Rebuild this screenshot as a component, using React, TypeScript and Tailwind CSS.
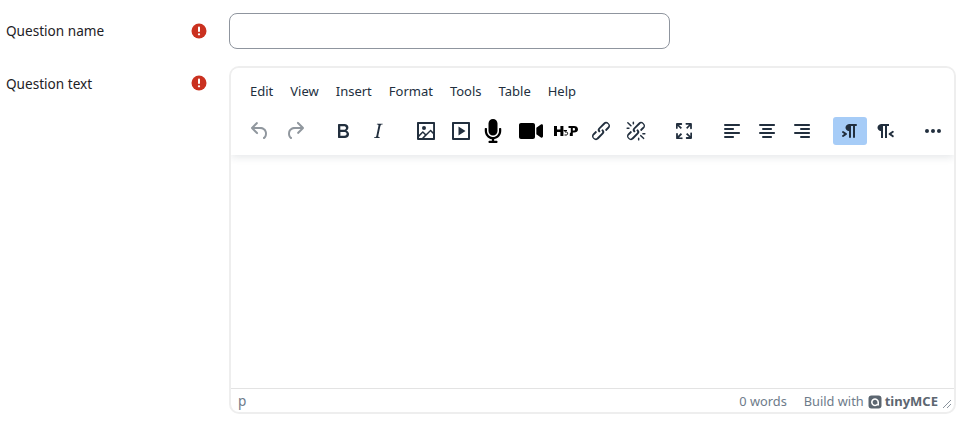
import React from "react";
import { FaMicrophone, FaVideo } from "react-icons/fa";

const P: Record<string, string> = {
  undo: "M6.4 8H12c3.7 0 6.2 2 6.8 5.1.6 2.7-.4 5.6-2.3 6.8a1 1 0 0 1-1-1.8c1.1-.6 1.8-2.7 1.4-4.6-.5-2.1-2.1-3.5-4.9-3.5H6.4l3.3 3.3a1 1 0 1 1-1.4 1.4l-5-5a1 1 0 0 1 0-1.4l5-5a1 1 0 0 1 1.4 1.4L6.4 8Z",
  redo: "M17.6 10H12c-2.8 0-4.4 1.4-4.9 3.5-.4 2 .3 4 1.4 4.6a1 1 0 1 1-1 1.8c-2-1.2-2.9-4.1-2.3-6.8.6-3 3-5.1 6.8-5.1h5.6l-3.3-3.3a1 1 0 1 1 1.4-1.4l5 5a1 1 0 0 1 0 1.4l-5 5a1 1 0 0 1-1.4-1.4l3.3-3.3Z",
  bold: "M7.8 19c-.3 0-.5 0-.6-.2l-.2-.5V5.7c0-.2 0-.4.2-.5l.6-.2h5c1.5 0 2.7.3 3.5 1 .7.6 1.1 1.4 1.1 2.5a3 3 0 0 1-.6 1.9c-.4.6-1 1-1.6 1.2.4.1.9.3 1.3.6s.8.7 1 1.2c.4.4.5 1 .5 1.6 0 1.3-.4 2.3-1.3 3-.8.7-2.1 1-3.8 1H7.8Zm5-8.3c.6 0 1.2-.1 1.6-.5.4-.3.6-.7.6-1.3 0-1.1-.8-1.7-2.3-1.7H9.3v3.5h3.4Zm.5 6c.7 0 1.3-.1 1.7-.4.4-.4.6-.9.6-1.5s-.2-1-.7-1.4c-.4-.3-1-.4-2-.4H9.4v3.8h4Z",
  italic: "M16.7 4.7l-.1.9h-.3c-.6 0-1 0-1.4.3-.3.3-.4.6-.5 1.1l-2.1 9.8v.6c0 .5.4.8 1.4.8h.2l-.2.8H8l.2-.8h.2c1.1 0 1.8-.5 2-1.5l2-9.8.1-.5c0-.6-.4-.8-1.4-.8h-.3l.2-.9h5.8Z",
  image: "m5 15.7 3.3-3.2c.3-.3.7-.3 1 0L12 15l4.1-4c.3-.4.8-.4 1 0l2 1.9V5H5v10.7ZM5 18V19h3l2.8-2.9-2-2L5 17.9Zm14-3-2.5-2.4-6.4 6.5H19v-4ZM4 3h16c.6 0 1 .4 1 1v16c0 .6-.4 1-1 1H4a1 1 0 0 1-1-1V4c0-.6.4-1 1-1Zm6 8a2 2 0 1 0 0-4 2 2 0 0 0 0 4Z",
  embed: "M4 3h16c.6 0 1 .4 1 1v16c0 .6-.4 1-1 1H4a1 1 0 0 1-1-1V4c0-.6.4-1 1-1Zm1 2v14h14V5H5Zm4.500 2.500 7 4.500-7 4.500v-9Z",
  link: "M6.2 12.3a1 1 0 0 1 1.4 1.4l-2 2a2 2 0 1 0 2.6 2.8l4.8-4.8a1 1 0 0 0 0-1.4 1 1 0 1 1 1.4-1.3 2.9 2.9 0 0 1 0 4L9.6 20a3.9 3.9 0 0 1-5.5-5.5l2-2Zm11.6-.6a1 1 0 0 1-1.4-1.4l2-2a2 2 0 1 0-2.6-2.8L11 10a1 1 0 0 0 0 1.4A1 1 0 1 1 9.6 13a2.9 2.9 0 0 1 0-4L14.4 4a3.9 3.9 0 0 1 5.5 5.5l-2 2Z",
  unlink: "M6.2 12.3a1 1 0 0 1 1.4 1.4l-2.1 2a2 2 0 1 0 2.7 2.8l4.8-4.8a1 1 0 0 0 0-1.4 1 1 0 1 1 1.4-1.3 2.9 2.9 0 0 1 0 4L9.6 20a3.9 3.9 0 0 1-5.5-5.5l2-2Zm11.6-.6a1 1 0 0 1-1.4-1.4l2.1-2a2 2 0 1 0-2.7-2.8L11 10a1 1 0 0 0 0 1.4A1 1 0 1 1 9.6 13a2.9 2.9 0 0 1 0-4L14.4 4a3.9 3.9 0 0 1 5.5 5.5l-2 2ZM7.6 6.3a.8.8 0 0 1-1 1.1L3.3 4.2a.7.7 0 1 1 1-1l3.2 3.1ZM5.1 8.6a.8.8 0 0 1 0 1.5H3a.8.8 0 0 1 0-1.5H5Zm5-3.5a.8.8 0 0 1-1.5 0V3a.8.8 0 0 1 1.5 0v2Zm6 11.8a.8.8 0 0 1 1-1l3.2 3.2a.8.8 0 0 1-1 1L16 17Zm-2.2 2a.8.8 0 0 1 1.5 0V21a.8.8 0 0 1-1.5 0V19Zm5-3.5a.7.7 0 1 1 0-1.5H21a.8.8 0 0 1 0 1.5H19Z",
  full: "M15.3 10l-1.2-1.3 2.9-3h-2.3a.9.9 0 1 1 0-1.7H19c.5 0 .9.4.9.9v4.4a.9.9 0 1 1-1.8 0V7l-2.9 3Zm0 4l3 3v-2.3a.9.9 0 1 1 1.7 0V19c0 .5-.4.9-.9.9h-4.4a.9.9 0 1 1 0-1.8H17l-3-2.9 1.3-1.2ZM10 15.4l-2.9 3h2.3a.9.9 0 1 1 0 1.7H5a.9.9 0 0 1-.9-.9v-4.4a.9.9 0 1 1 1.8 0V17l2.9-3 1.2 1.3ZM8.7 10L5.7 7v2.3a.9.9 0 0 1-1.7 0V5c0-.5.4-.9.9-.9h4.4a.9.9 0 0 1 0 1.8H7l3 2.9-1.3 1.2Z",
  left: "M5 5h14c.6 0 1 .4 1 1s-.4 1-1 1H5a1 1 0 1 1 0-2Zm0 4h8c.6 0 1 .4 1 1s-.4 1-1 1H5a1 1 0 1 1 0-2Zm0 8h8c.6 0 1 .4 1 1s-.4 1-1 1H5a1 1 0 0 1 0-2Zm0-4h14c.6 0 1 .4 1 1s-.4 1-1 1H5a1 1 0 0 1 0-2Z",
  center: "M5 5h14c.6 0 1 .4 1 1s-.4 1-1 1H5a1 1 0 1 1 0-2Zm3 4h8c.6 0 1 .4 1 1s-.4 1-1 1H8a1 1 0 1 1 0-2Zm0 8h8c.6 0 1 .4 1 1s-.4 1-1 1H8a1 1 0 0 1 0-2Zm-3-4h14c.6 0 1 .4 1 1s-.4 1-1 1H5a1 1 0 0 1 0-2Z",
  right: "M5 5h14c.6 0 1 .4 1 1s-.4 1-1 1H5a1 1 0 1 1 0-2Zm6 4h8c.6 0 1 .4 1 1s-.4 1-1 1h-8a1 1 0 0 1 0-2Zm0 8h8c.6 0 1 .4 1 1s-.4 1-1 1h-8a1 1 0 0 1 0-2Zm-6-4h14c.6 0 1 .4 1 1s-.4 1-1 1H5a1 1 0 0 1 0-2Z",
  ltr: "M11 5h7a1 1 0 0 1 0 2h-1v11a1 1 0 0 1-2 0V7h-2v11a1 1 0 0 1-2 0v-6c-.5 0-1 0-1.4-.3A3.4 3.4 0 0 1 7.8 10a3.3 3.3 0 0 1 0-2.8 3.4 3.4 0 0 1 1.8-1.8L11 5ZM4.4 16.2L6.2 15l-1.8-1.2a1 1 0 0 1 1.2-1.6l3 2a1 1 0 0 1 0 1.6l-3 2a1 1 0 1 1-1.2-1.6Z",
  rtl: "M8 5h8v2h-2v12h-2V7h-2v12H8v-7c-.5 0-1 0-1.4-.3A3.4 3.4 0 0 1 4.8 10a3.3 3.3 0 0 1 0-2.8 3.4 3.4 0 0 1 1.8-1.8L8 5Zm12 11.2a1 1 0 1 1-1 1.6l-3-2a1 1 0 0 1 0-1.6l3-2a1 1 0 1 1 1 1.6L18.4 15l1.8 1.2Z",
  more: "M6 10a2 2 0 0 0-2 2c0 1.1.9 2 2 2a2 2 0 0 0 2-2 2 2 0 0 0-2-2Zm12 0a2 2 0 0 0-2 2c0 1.1.9 2 2 2a2 2 0 0 0 2-2 2 2 0 0 0-2-2Zm-6 0a2 2 0 0 0-2 2c0 1.1.9 2 2 2a2 2 0 0 0 2-2 2 2 0 0 0-2-2Z",
};

function Btn({ name, dim, active }: { name: string; dim?: boolean; active?: boolean }) {
  return (
    <div className={`flex h-[28px] w-[34px] items-center justify-center rounded-[3px] ${active ? "bg-[#a6ccf7]" : ""}`}>
      <svg width="24" height="24" viewBox="0 0 24 24" fill={dim ? "#222f3e80" : "#222f3e"} fillRule="evenodd">
        <path d={P[name]} />
      </svg>
    </div>
  );
}

function Required() {
  return (
    <svg width="16" height="16" viewBox="0 0 16 16" className="shrink-0">
      <circle cx="8" cy="8" r="7.5" fill="#ca3120" />
      <rect x="7" y="3.6" width="2" height="5.4" rx="0.9" fill="#fff" />
      <circle cx="8" cy="11.3" r="1.15" fill="#fff" />
    </svg>
  );
}

function H5P() {
  return (
    <svg width="24" height="12" viewBox="0 0 24 12" fill="#000">
      <path d="M0 1h3v3.400h3.400V1h3v10h-3V7H3v4H0V1Z" />
      <path fill="none" stroke="#000" d="M9.500 5.500h3.500M11 5.500v1.500h1.600c1.400 0 1.400 3-.2 3H10.500" />
      <path fillRule="evenodd" d="M14.500 1h5.500c2.400 0 4 1.200 4 3.300s-1.600 3.300-4 3.300h-1.200V11h-3V8.400l1-1.200V3h-2.300V1Zm4.300 2v2.600h1c.8 0 1.200-.5 1.200-1.300S20.600 3 19.800 3h-1Z" />
    </svg>
  );
}

const menu = ["Edit", "View", "Insert", "Format", "Tools", "Table", "Help"];

export default function App() {
  return (
    <div className="h-[422px] w-[962px] overflow-hidden bg-white pt-[13px] font-['Noto_Sans',sans-serif] text-[13.6px] text-[#1d2125]">
      <div className="flex items-center">
        <div className="w-[191px] pl-[6px]">Question name</div>
        <Required />
        <div className="ml-[22px] h-[36px] w-[441px] rounded-[8px] border border-[#8f959e] bg-white" />
      </div>
      <div className="mt-[17px] flex items-start">
        <div className="w-[191px] pl-[6px] pt-[8px] leading-[20px]">Question text</div>
        <div className="pt-[9px]">
          <Required />
        </div>
        <div className="ml-[22px] flex h-[348px] w-[727px] flex-col overflow-hidden rounded-[10px] border-2 border-[#eeeeee] bg-white">
          <div className="relative z-10 flex h-[87px] flex-col bg-white shadow-[0_2px_8px_rgba(34,47,62,0.12)]">
            <div className="mt-[10px] flex h-[28px] items-center gap-[17px] pl-[19px] text-[13px] text-[#222f3e]">
              {menu.map((m) => (
                <span key={m}>{m}</span>
              ))}
            </div>
            <div className="mt-[11px] flex gap-[14px] pl-[12px]">
              <div className="flex gap-px"><Btn name="undo" dim /><Btn name="redo" dim /></div>
              <div className="flex gap-px"><Btn name="bold" /><Btn name="italic" /></div>
              <div className="flex gap-px">
                <Btn name="image" />
                <Btn name="embed" />
                <div className="flex h-[28px] w-[34px] items-center pl-[2px] text-black"><FaMicrophone size={24} /></div>
                <div className="flex h-[28px] w-[34px] items-center justify-center text-black"><FaVideo size={24} /></div>
                <div className="flex h-[28px] w-[34px] items-center justify-center"><H5P /></div>
                <Btn name="link" />
                <Btn name="unlink" />
              </div>
              <div className="flex gap-px"><Btn name="full" /></div>
              <div className="flex gap-px"><Btn name="left" /><Btn name="center" /><Btn name="right" /></div>
              <div className="flex gap-px"><Btn name="ltr" active /><Btn name="rtl" /></div>
              <div className="flex gap-px"><Btn name="more" /></div>
            </div>
          </div>
          <div className="flex-1" />
          <div className="flex h-[24px] items-center border-t border-[#e3e3e3] pl-[7px] pr-[2px] pt-[2px] text-[12.8px] text-[#6e7b8a]">
            <span className="text-[13.6px]">p</span>
            <span className="ml-auto">0 words</span>
            <span className="ml-[17px]">Build with</span>
            <svg width="14" height="14" viewBox="0 0 14 14" className="ml-[4px]" fillRule="evenodd">
              <path fill="#5c6670" d="M3.500.5h7a3 3 0 0 1 3 3v7a3 3 0 0 1-3 3h-7a3 3 0 0 1-3-3v-7a3 3 0 0 1 3-3Z" />
              <path fill="none" stroke="#fff" strokeWidth="1.600" d="M9.500 9.300A3.200 3.200 0 1 1 10.200 7v3.500" />
            </svg>
            <span className="ml-[3px] text-[13px] font-bold text-[#5c6670]">tinyMCE</span>
            <svg width="10" height="10" viewBox="0 0 10 10" className="ml-[4px] mt-[5px]" stroke="#8a939d" fill="none">
              <path d="M1 9 9 1M5 9l4-4" />
            </svg>
          </div>
        </div>
      </div>
    </div>
  );
}
